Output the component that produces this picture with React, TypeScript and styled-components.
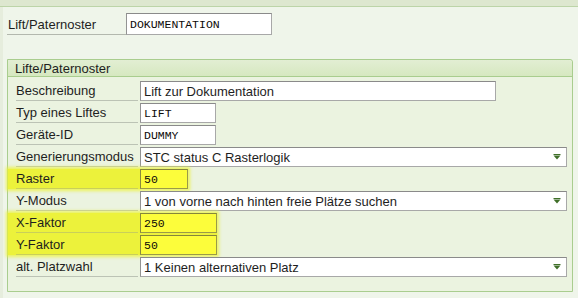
import React from 'react';
import styled, { createGlobalStyle } from 'styled-components';

const Global = createGlobalStyle`
  html, body { margin: 0; padding: 0; background: #eff5ea; }
  body {
    font-family: "Liberation Sans", Arial, sans-serif;
    font-size: 13px;
    color: #1e1e1e;
  }
`;

const Page = styled.div`
  width: 578px;
  height: 298px;
  overflow: hidden;
  background: linear-gradient(to right, #e6eddd 0, #e6eddd 3px, #eff5ea 3px);
`;

const TopBar = styled.div`
  height: 6px;
  background: #dde7cf;
  border-bottom: 1px solid #bcd4a8;
`;

const Main = styled.div`
  padding: 6px 5px 0 7px;
`;

const HeadRow = styled.div`
  display: flex;
  align-items: flex-start;
`;

const HeadLabel = styled.div`
  width: 119px;
  height: 22px;
  line-height: 23px;
  border-bottom: 1px solid #b3b8ae;
  padding-left: 1px;
  box-sizing: border-box;
`;

const Group = styled.section`
  margin-top: 24px;
  width: 566px;
  box-sizing: border-box;
  border: 1px solid #a9cd8e;
  border-top-right-radius: 3px;
  background: #ebf3e0;
`;

const GroupHeader = styled.div`
  height: 16px;
  line-height: 17px;
  padding-left: 7px;
  background: linear-gradient(#e2eed3, #d6e8c0);
  border-bottom: 1px solid #a9cd8e;
  border-top-right-radius: 3px;
`;

const GroupBody = styled.div`
  display: flex;
  flex-direction: column;
  gap: 2px;
  padding: 4px 0 14px 8px;
`;

const Highlight = styled.div`
  display: flex;
  flex-direction: column;
  gap: 2px;
  align-self: flex-start;
  margin-left: -8px;
  padding-left: 8px;
  background: #ecf23b;
  box-shadow: 0 0 3px 2px rgba(236, 242, 59, 0.8);
`;

const Row = styled.div`
  display: flex;
  align-items: flex-start;
`;

const Label = styled.div<{ $hl?: boolean }>`
  width: 122px;
  margin-right: 2px;
  height: 20px;
  line-height: 20px;
  box-sizing: border-box;
  border-bottom: 1px solid ${(p) => (p.$hl ? '#c9cf5a' : '#bcc3b5')};
`;

const Field = styled.div<{ $w: number; $mono?: boolean; $hl?: boolean; $h?: number }>`
  width: ${(p) => p.$w}px;
  height: ${(p) => p.$h ?? 20}px;
  box-sizing: border-box;
  border: 1px solid ${(p) => (p.$hl ? '#9a9a48' : '#a8a8a8')};
  border-top-color: ${(p) => (p.$hl ? '#85853a' : '#8a8a8a')};
  border-left-color: ${(p) => (p.$hl ? '#8a8a3e' : '#939393')};
  background: ${(p) => (p.$hl ? '#fcfd3b' : '#ffffff')};
  padding: 0 3px;
  line-height: ${(p) => (p.$h ?? 20) - 1}px;
  white-space: nowrap;
  overflow: hidden;
  font-family: ${(p) =>
    p.$mono ? '"Liberation Mono", "Courier New", monospace' : '"Liberation Sans", Arial, sans-serif'};
  font-size: ${(p) => (p.$mono ? '11.5px' : '13px')};
  color: ${(p) => (p.$mono ? '#0d0a08' : '#1e1e1e')};
`;

const SelectBox = styled.div`
  width: 427px;
  height: 20px;
  box-sizing: border-box;
  border: 1px solid #a8a8a8;
  border-top-color: #8a8a8a;
  border-left-color: #939393;
  background: #ffffff;
  padding: 0 5px 0 3px;
  display: flex;
  align-items: center;
  justify-content: space-between;
  white-space: nowrap;
`;

const Arrow = () => (
  <svg width="8" height="6" viewBox="0 0 8 6">
    <rect x="0.5" y="0" width="7" height="1" fill="#3f6f28" />
    <polygon points="0.5,1.5 7.5,1.5 4,5.5" fill="#3f6f28" />
  </svg>
);

const Select = ({ value }: { value: string }) => (
  <SelectBox>
    <span>{value}</span>
    <Arrow />
  </SelectBox>
);

export default function App() {
  return (
    <Page>
      <Global />
      <TopBar />
      <Main>
        <HeadRow>
          <HeadLabel>Lift/Paternoster</HeadLabel>
          <Field $w={146} $h={22} $mono>
            DOKUMENTATION
          </Field>
        </HeadRow>
        <Group>
          <GroupHeader>Lifte/Paternoster</GroupHeader>
          <GroupBody>
            <Row>
              <Label>Beschreibung</Label>
              <Field $w={356}>Lift zur Dokumentation</Field>
            </Row>
            <Row>
              <Label>Typ eines Liftes</Label>
              <Field $w={76} $mono>
                LIFT
              </Field>
            </Row>
            <Row>
              <Label>Geräte-ID</Label>
              <Field $w={76} $mono>
                DUMMY
              </Field>
            </Row>
            <Row>
              <Label>Generierungsmodus</Label>
              <Select value="STC status C Rasterlogik" />
            </Row>
            <Highlight>
              <Row>
                <Label $hl>Raster</Label>
                <Field $w={48} $mono $hl>
                  50
                </Field>
              </Row>
            </Highlight>
            <Row>
              <Label>Y-Modus</Label>
              <Select value="1 von vorne nach hinten freie Plätze suchen" />
            </Row>
            <Highlight>
              <Row>
                <Label $hl>X-Faktor</Label>
                <Field $w={77} $mono $hl>
                  250
                </Field>
              </Row>
              <Row>
                <Label $hl>Y-Faktor</Label>
                <Field $w={77} $mono $hl>
                  50
                </Field>
              </Row>
            </Highlight>
            <Row>
              <Label>alt. Platzwahl</Label>
              <Select value="1 Keinen alternativen Platz" />
            </Row>
          </GroupBody>
        </Group>
      </Main>
    </Page>
  );
}
